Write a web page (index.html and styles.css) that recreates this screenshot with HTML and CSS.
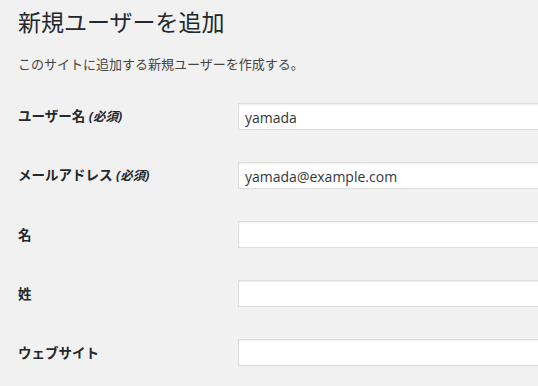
FILE: index.html
```html
<!DOCTYPE html>
<html lang="ja">
<head>
<meta charset="utf-8">
<title>新規ユーザーを追加</title>
<link rel="stylesheet" href="styles.css">
</head>
<body>
<div class="wrap">
  <h1 class="title">新規ユーザーを追加</h1>
  <p class="desc">このサイトに追加する新規ユーザーを作成する。</p>
  <form class="form">
    <div class="row">
      <label class="label" for="user_login">ユーザー名 <span class="req">(必須)</span></label>
      <input class="input" id="user_login" type="text" value="yamada">
    </div>
    <div class="row">
      <label class="label" for="email">メールアドレス <span class="req">(必須)</span></label>
      <input class="input" id="email" type="text" value="yamada@example.com">
    </div>
    <div class="row">
      <label class="label" for="first_name">名</label>
      <input class="input" id="first_name" type="text" value="">
    </div>
    <div class="row">
      <label class="label" for="last_name">姓</label>
      <input class="input" id="last_name" type="text" value="">
    </div>
    <div class="row">
      <label class="label" for="url">ウェブサイト</label>
      <input class="input" id="url" type="text" value="">
    </div>
  </form>
</div>
</body>
</html>
```

FILE: styles.css
```css
html, body {
  margin: 0;
  padding: 0;
  background: #f1f1f1;
  overflow: hidden;
}

body {
  font-family: "Open Sans", "Noto Sans CJK JP", sans-serif;
  color: #444;
}

.wrap {
  padding: 7px 0 0 18px;
  overflow: hidden;
}

.title {
  margin: 0;
  font-size: 23px;
  font-weight: 400;
  line-height: 30px;
  color: #23282d;
}

.desc {
  margin: 17px 0 0;
  font-size: 13px;
  line-height: 20px;
  color: #444;
}

.form {
  margin-top: 13px;
  display: flex;
  flex-direction: column;
}

.row {
  display: flex;
  align-items: center;
  height: 59px;
  margin-right: -10px;
}

.label {
  flex: 0 0 220px;
  font-size: 13.5px;
  font-weight: 700;
  color: #23282d;
  line-height: 20px;
}

.req {
  font-size: 12.5px;
  font-style: italic;
}

.input {
  flex: 1 1 auto;
  min-width: 0;
  box-sizing: border-box;
  height: 27px;
  margin: 0;
  padding: 2px 6px 0;
  border: 1px solid #ddd;
  background: #fff;
  box-shadow: inset 0 1px 2px rgba(0, 0, 0, 0.07);
  font-family: "Open Sans", "Noto Sans CJK JP", sans-serif;
  font-size: 14px;
  color: #32373c;
  outline: none;
}
```
